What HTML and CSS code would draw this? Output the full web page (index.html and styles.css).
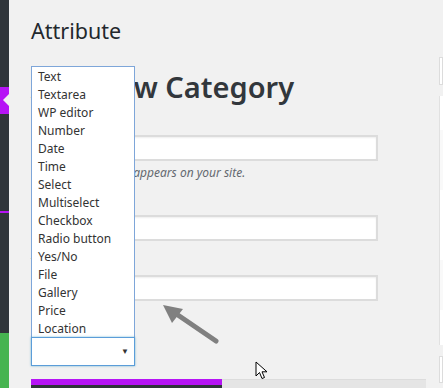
FILE: index.html
```html
<!DOCTYPE html>
<html lang="en">
<head>
  <meta charset="UTF-8" />
  <title>Attribute</title>
  <link rel="stylesheet" href="styles.css">
</head>
<body>

  <div class="adminmenu">
    <div class="menu-gap"></div>
    <div class="menu-current"></div>
    <div class="menu-gap2"></div>
    <div class="menu-line"></div>
    <div class="menu-gap3"></div>
    <div class="menu-green"></div>
  </div>

  <div class="wrap">
    <h1 class="page-title">Attribute</h1>

    <div class="cols">
      <div class="col-left">
        <h2>Add New Category</h2>

        <div class="form-field">
          <label>Name</label>
          <input type="text">
          <p class="desc">The name is how it appears on your site.</p>
        </div>

        <div class="form-field">
          <label>Slug</label>
          <input type="text">
        </div>

        <div class="form-field">
          <label>Type</label>
          <input type="text">
        </div>
      </div>

      <div class="col-right">
        <div class="search-box"></div>
        <div class="table">
          <div class="row r1"></div>
          <div class="row r2"></div>
          <div class="row r3"></div>
          <div class="row r4"></div>
          <div class="row r5"></div>
        </div>
        <div class="bottom-box"></div>
      </div>
    </div>

    <div class="footer-bar">
      <div class="progress"></div>
      <div class="rest"></div>
    </div>

    <!-- open select list -->
    <div class="type-select">
      <ul class="options">
        <li>Text</li>
        <li>Textarea</li>
        <li>WP editor</li>
        <li>Number</li>
        <li>Date</li>
        <li>Time</li>
        <li>Select</li>
        <li>Multiselect</li>
        <li>Checkbox</li>
        <li>Radio button</li>
        <li>Yes/No</li>
        <li>File</li>
        <li>Gallery</li>
        <li>Price</li>
        <li>Location</li>
      </ul>
      <div class="select-box"><span class="caret">▼</span></div>
    </div>

    <svg class="hint-arrow" width="64" height="46" viewBox="0 0 64 46">
      <line x1="12" y1="8" x2="56" y2="38" stroke="#808080" stroke-width="5" stroke-linecap="round"/>
      <polygon points="3,2 23,6 12,20" fill="#808080"/>
    </svg>

    <svg class="cursor" width="14" height="20" viewBox="0 0 14 20">
      <path d="M1 1 L1 15 L4.5 11.5 L7 17.5 L9.5 16.5 L7 10.8 L12 10.8 Z" fill="#fff" stroke="#000" stroke-width="1" stroke-linejoin="round"/>
    </svg>
  </div>

</body>
</html>
```

FILE: styles.css
```css
body {
  margin: 0;
  width: 443px;
  height: 388px;
  overflow: hidden;
  display: flex;
  background: #f1f1f1;
  font-family: 'Noto Sans', 'Open Sans', sans-serif;
  color: #23282d;
}

.adminmenu {
  width: 9px;
  flex-shrink: 0;
  background: #30353a;
  display: flex;
  flex-direction: column;
}

.menu-gap { height: 87px; }

.menu-current {
  height: 27px;
  background: #b614f5;
  position: relative;
}

.menu-current::after {
  content: '';
  position: absolute;
  right: 0;
  top: 13px;
  border: 6px solid transparent;
  border-right-color: #f1f1f1;
  margin-top: -6px;
}

.menu-gap2 { height: 97px; }

.menu-line {
  height: 2px;
  background: #b614f5;
}

.menu-gap3 { height: 120px; }

.menu-green {
  flex: 1;
  background: #46b450;
}

.wrap {
  flex: 1;
  position: relative;
  display: flex;
  flex-direction: column;
  padding-left: 22px;
}

.page-title {
  margin: 0;
  padding-top: 16px;
  font-size: 21.5px;
  font-weight: 400;
  line-height: 30px;
}

.cols {
  flex: 1;
  min-height: 0;
  display: flex;
  gap: 61px;
}

.col-left {
  width: 347px;
  flex-shrink: 0;
}

.col-left h2 {
  margin: 22px 0 0;
  font-size: 29px;
  font-weight: 600;
  line-height: 38px;
  color: #32373c;
}

.form-field label {
  display: block;
  font-size: 13px;
  line-height: 18px;
  margin: 7px 0 4px;
}

.form-field input {
  display: block;
  width: 100%;
  height: 26px;
  box-sizing: border-box;
  margin: 0;
  border: 2px solid #dcdcdc;
  background: #fff;
  box-shadow: inset 0 1px 2px rgba(0, 0, 0, 0.07);
}

.form-field:nth-child(3) { margin-top: 12px; }
.form-field:nth-child(4) { margin-top: 12px; }

.desc {
  margin: 4px 0 0;
  font-size: 12px;
  font-style: italic;
  color: #646970;
  line-height: 16px;
}

.col-right {
  flex: 1;
}

.search-box {
  height: 28px;
  margin-top: 11px;
  background: #fff;
  border: 1px solid #dcdcdc;
  box-sizing: border-box;
}

.table {
  margin-top: 11px;
  border-left: 1px solid #e1e1e1;
}

.row { background: #fff; }
.r1 { height: 34px; }
.r2 { height: 60px; background: #f9f9f9; }
.r3 { height: 70px; }
.r4 { height: 50px; background: #f9f9f9; }
.r5 { height: 35px; }

.bottom-box {
  height: 27px;
  margin-top: 11px;
  background: #fff;
  border: 1px solid #dcdcdc;
  box-sizing: border-box;
}

.footer-bar {
  display: flex;
  width: 395px;
  height: 9px;
  flex-shrink: 0;
}

.progress {
  width: 191px;
  background: #30353a;
  border-top: 6px solid #b614f5;
  box-sizing: border-box;
}

.rest {
  flex: 1;
  background: #e5e5e5;
  border-top: 1px solid #dcdcdc;
}

.type-select {
  position: absolute;
  left: 22px;
  top: 66px;
  width: 104px;
}

.options {
  list-style: none;
  margin: 0;
  padding: 1px 0 0;
  background: #fff;
  border: 1px solid #7ea6d9;
  border-bottom: none;
  height: 271px;
  box-sizing: border-box;
}

.options li {
  font-size: 12px;
  line-height: 18px;
  padding-left: 6px;
  color: #333;
}

.select-box {
  height: 29px;
  box-sizing: border-box;
  background: #fff;
  border: 1px solid #5b9dd9;
  box-shadow: 0 0 2px rgba(30, 140, 190, 0.6);
  position: relative;
}

.caret {
  position: absolute;
  right: 5px;
  top: 7px;
  font-size: 8px;
  color: #333;
}

.hint-arrow {
  position: absolute;
  left: 151px;
  top: 303px;
}

.cursor {
  position: absolute;
  left: 246px;
  top: 361px;
}
```
